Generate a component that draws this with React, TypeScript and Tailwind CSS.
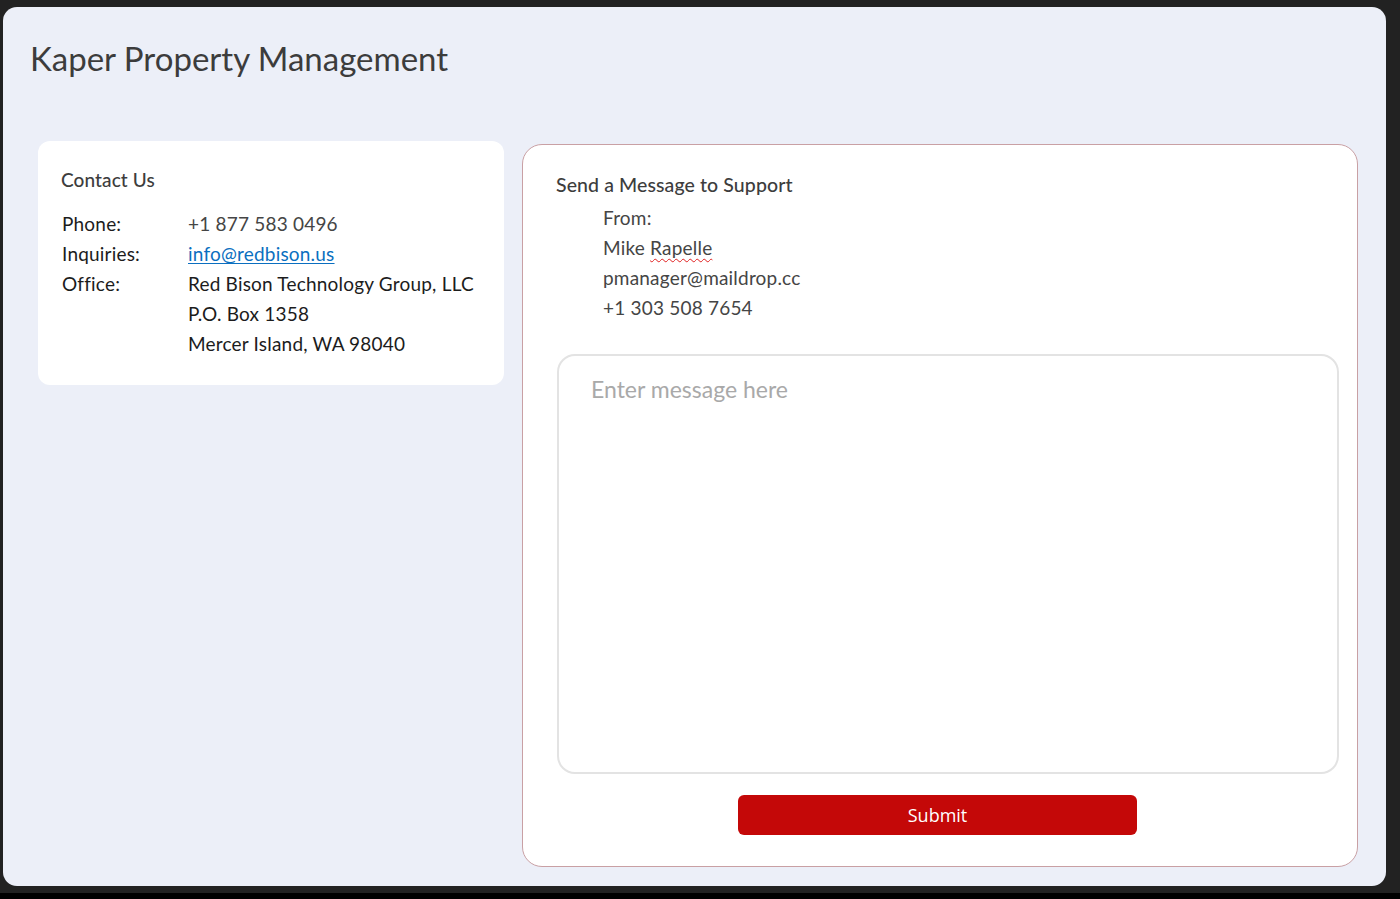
import React from 'react';

const font = { fontFamily: 'Lato, "Noto Sans", sans-serif' };

export default function App() {
  const contact = [
    { label: 'Phone:', lines: ['+1 877 583 0496'], kind: 'phone' },
    { label: 'Inquiries:', lines: ['info@redbison.us'], kind: 'link' },
    {
      label: 'Office:',
      lines: ['Red Bison Technology Group, LLC', 'P.O. Box 1358', 'Mercer Island, WA 98040'],
      kind: 'text',
    },
  ];

  return (
    <div className="w-[1400px] h-[899px] bg-[#222222] flex flex-col overflow-hidden" style={font}>
      <div className="pt-[7px] pl-[3px] pr-[14px]">
        <div className="h-[879px] bg-[#eceff8] rounded-[14px] flex flex-col">
          <h1 className="pt-[31px] pl-[27px] text-[33px] leading-[40px] text-[#3c3c3c] font-normal">
            Kaper Property Management
          </h1>

          <div className="flex items-start gap-[18px] pl-[35px] pr-[28px] mt-[63px]">
            {/* contact card */}
            <div className="w-[466px] shrink-0 bg-white rounded-[12px] pt-[27px] pb-[26px] pl-[23px] pr-[10px]">
              <h2 className="text-[19px] leading-[24px] tracking-[0.1px] text-[#3d3d3d] font-medium">Contact Us</h2>
              <div className="mt-[17px] pl-px grid grid-cols-[126px_1fr] text-[19px] leading-[30px] tracking-[0.2px]">
                {contact.map((row) => (
                  <React.Fragment key={row.label}>
                    <div className="text-[#1c1c1c]">{row.label}</div>
                    <div>
                      {row.lines.map((l) =>
                        row.kind === 'link' ? (
                          <a key={l} href="#" className="text-[#0b6fc0] underline underline-offset-2">
                            {l}
                          </a>
                        ) : (
                          <div key={l} className={row.kind === 'phone' ? 'text-[#454545]' : 'text-[#1c1c1c]'}>
                            {l}
                          </div>
                        )
                      )}
                    </div>
                  </React.Fragment>
                ))}
              </div>
            </div>

            {/* message card */}
            <div className="flex-1 mt-[3px] h-[723px] bg-white border border-[#c9a0a4] rounded-[20px] pt-[28px] pl-[33px] pr-[18px] flex flex-col">
              <h2 className="text-[19.5px] leading-[24px] tracking-[0.1px] text-[#3d3d3d] font-medium">
                Send a Message to Support
              </h2>
              <div className="mt-[6px] ml-[47px] text-[19px] leading-[30px] tracking-[0.2px] text-[#454545]">
                <div>From:</div>
                <div>
                  Mike{' '}
                  <span className="underline decoration-wavy decoration-[#e02020] decoration-1 underline-offset-[3px]">
                    Rapelle
                  </span>
                </div>
                <div>pmanager@maildrop.cc</div>
                <div>+1 303 508 7654</div>
              </div>
              <textarea
                placeholder="Enter message here"
                className="mt-[31px] ml-px h-[420px] w-[782px] resize-none border-2 border-[#e3e3e3] rounded-[18px] pt-[17px] pl-[32px] text-[23px] leading-[33px] text-[#333] placeholder:text-[#a9a9a9] outline-none"
                style={font}
              />
              <div className="pl-[182px] mt-[21px]">
                <button
                  className="w-[399px] h-[40px] bg-[#c40808] rounded-[6px] text-white text-[18px]"
                  style={{ fontFamily: '"Open Sans", sans-serif' }}
                >
                  Submit
                </button>
              </div>
            </div>
            <div className="w-px h-[255px] -mt-[26px] bg-[#e2e5ee] -ml-[11px]" />
          </div>
        </div>
      </div>
      <div className="h-[7px] bg-[#222222]" />
      <div className="flex-1 bg-black" />
    </div>
  );
}
